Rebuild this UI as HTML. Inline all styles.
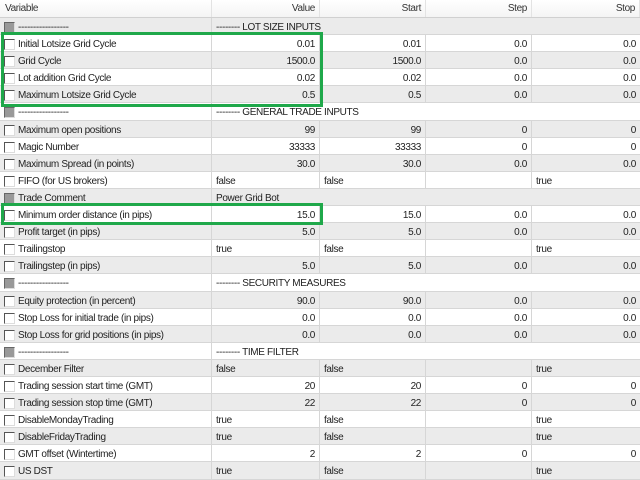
<!DOCTYPE html>
<html><head><meta charset="utf-8"><style>
*{margin:0;padding:0;box-sizing:border-box}
body{width:640px;height:480px;overflow:hidden;background:#fff;font-family:"Liberation Sans",sans-serif;font-size:10px;letter-spacing:-0.35px;color:#222}
.r{display:flex;height:17.1px;border-bottom:1px solid #d6d6d6;line-height:19px}
.r.g{background:#ebebeb}
.c{border-right:1px solid #d6d6d6;white-space:nowrap;overflow:hidden;padding:0 4px}
.c0{width:212px;padding-left:18px;position:relative}
.c1{width:108px}.c2{width:106px}.c3{width:106px}.c4{width:108px;border-right:none}
.rt{text-align:right}
.cb{position:absolute;left:4px;top:4px;width:11px;height:11px;background:#fff;border-top:1px solid #555;border-left:1px solid #555;border-right:1px solid #ddd;border-bottom:1px solid #ddd}
.s .cb{background:#999;border-top-color:#666;border-left-color:#666}
.h{height:18px;display:flex;background:linear-gradient(#fff,#f4f4f4);border-bottom:1px solid #d0d0d0;line-height:17px;color:#333}
.h .c{border-right:1px solid #e3e3e3}
.sec{width:428px;padding:0 4px;border-right:none}
.box{position:absolute;border:3px solid #1fa84a}
</style></head><body>
<div class="h"><div class="c c0" style="padding-left:5px">Variable</div><div class="c c1 rt">Value</div><div class="c c2 rt">Start</div><div class="c c3 rt">Step</div><div class="c c4 rt">Stop</div></div>

<div class="r g s"><div class="c c0"><span class="cb"></span>-----------------</div><div class="c sec">-------- LOT SIZE INPUTS</div></div>
<div class="r"><div class="c c0"><span class="cb"></span>Initial Lotsize Grid Cycle</div><div class="c c1 rt">0.01</div><div class="c c2 rt">0.01</div><div class="c c3 rt">0.0</div><div class="c c4 rt">0.0</div></div>
<div class="r g"><div class="c c0"><span class="cb"></span>Grid Cycle</div><div class="c c1 rt">1500.0</div><div class="c c2 rt">1500.0</div><div class="c c3 rt">0.0</div><div class="c c4 rt">0.0</div></div>
<div class="r"><div class="c c0"><span class="cb"></span>Lot addition Grid Cycle</div><div class="c c1 rt">0.02</div><div class="c c2 rt">0.02</div><div class="c c3 rt">0.0</div><div class="c c4 rt">0.0</div></div>
<div class="r g"><div class="c c0"><span class="cb"></span>Maximum Lotsize Grid Cycle</div><div class="c c1 rt">0.5</div><div class="c c2 rt">0.5</div><div class="c c3 rt">0.0</div><div class="c c4 rt">0.0</div></div>
<div class="r s"><div class="c c0"><span class="cb"></span>-----------------</div><div class="c sec">-------- GENERAL TRADE INPUTS</div></div>
<div class="r g"><div class="c c0"><span class="cb"></span>Maximum open positions</div><div class="c c1 rt">99</div><div class="c c2 rt">99</div><div class="c c3 rt">0</div><div class="c c4 rt">0</div></div>
<div class="r"><div class="c c0"><span class="cb"></span>Magic Number</div><div class="c c1 rt">33333</div><div class="c c2 rt">33333</div><div class="c c3 rt">0</div><div class="c c4 rt">0</div></div>
<div class="r g"><div class="c c0"><span class="cb"></span>Maximum Spread (in points)</div><div class="c c1 rt">30.0</div><div class="c c2 rt">30.0</div><div class="c c3 rt">0.0</div><div class="c c4 rt">0.0</div></div>
<div class="r"><div class="c c0"><span class="cb"></span>FIFO (for US brokers)</div><div class="c c1">false</div><div class="c c2">false</div><div class="c c3"></div><div class="c c4">true</div></div>
<div class="r g s"><div class="c c0"><span class="cb"></span>Trade Comment</div><div class="c sec">Power Grid Bot</div></div>
<div class="r"><div class="c c0"><span class="cb"></span>Minimum order distance (in pips)</div><div class="c c1 rt">15.0</div><div class="c c2 rt">15.0</div><div class="c c3 rt">0.0</div><div class="c c4 rt">0.0</div></div>
<div class="r g"><div class="c c0"><span class="cb"></span>Profit target (in pips)</div><div class="c c1 rt">5.0</div><div class="c c2 rt">5.0</div><div class="c c3 rt">0.0</div><div class="c c4 rt">0.0</div></div>
<div class="r"><div class="c c0"><span class="cb"></span>Trailingstop</div><div class="c c1">true</div><div class="c c2">false</div><div class="c c3"></div><div class="c c4">true</div></div>
<div class="r g"><div class="c c0"><span class="cb"></span>Trailingstep (in pips)</div><div class="c c1 rt">5.0</div><div class="c c2 rt">5.0</div><div class="c c3 rt">0.0</div><div class="c c4 rt">0.0</div></div>
<div class="r s"><div class="c c0"><span class="cb"></span>-----------------</div><div class="c sec">-------- SECURITY MEASURES</div></div>
<div class="r g"><div class="c c0"><span class="cb"></span>Equity protection (in percent)</div><div class="c c1 rt">90.0</div><div class="c c2 rt">90.0</div><div class="c c3 rt">0.0</div><div class="c c4 rt">0.0</div></div>
<div class="r"><div class="c c0"><span class="cb"></span>Stop Loss for initial trade (in pips)</div><div class="c c1 rt">0.0</div><div class="c c2 rt">0.0</div><div class="c c3 rt">0.0</div><div class="c c4 rt">0.0</div></div>
<div class="r g"><div class="c c0"><span class="cb"></span>Stop Loss for grid positions (in pips)</div><div class="c c1 rt">0.0</div><div class="c c2 rt">0.0</div><div class="c c3 rt">0.0</div><div class="c c4 rt">0.0</div></div>
<div class="r s"><div class="c c0"><span class="cb"></span>-----------------</div><div class="c sec">-------- TIME FILTER</div></div>
<div class="r g"><div class="c c0"><span class="cb"></span>December Filter</div><div class="c c1">false</div><div class="c c2">false</div><div class="c c3"></div><div class="c c4">true</div></div>
<div class="r"><div class="c c0"><span class="cb"></span>Trading session start time (GMT)</div><div class="c c1 rt">20</div><div class="c c2 rt">20</div><div class="c c3 rt">0</div><div class="c c4 rt">0</div></div>
<div class="r g"><div class="c c0"><span class="cb"></span>Trading session stop time (GMT)</div><div class="c c1 rt">22</div><div class="c c2 rt">22</div><div class="c c3 rt">0</div><div class="c c4 rt">0</div></div>
<div class="r"><div class="c c0"><span class="cb"></span>DisableMondayTrading</div><div class="c c1">true</div><div class="c c2">false</div><div class="c c3"></div><div class="c c4">true</div></div>
<div class="r g"><div class="c c0"><span class="cb"></span>DisableFridayTrading</div><div class="c c1">true</div><div class="c c2">false</div><div class="c c3"></div><div class="c c4">true</div></div>
<div class="r"><div class="c c0"><span class="cb"></span>GMT offset (Wintertime)</div><div class="c c1 rt">2</div><div class="c c2 rt">2</div><div class="c c3 rt">0</div><div class="c c4 rt">0</div></div>
<div class="r g"><div class="c c0"><span class="cb"></span>US DST</div><div class="c c1">true</div><div class="c c2">false</div><div class="c c3"></div><div class="c c4">true</div></div>

<div class="box" style="left:1px;top:32px;width:322px;height:75px"></div>
<div class="box" style="left:1px;top:203px;width:322px;height:22px"></div>
</body></html>
